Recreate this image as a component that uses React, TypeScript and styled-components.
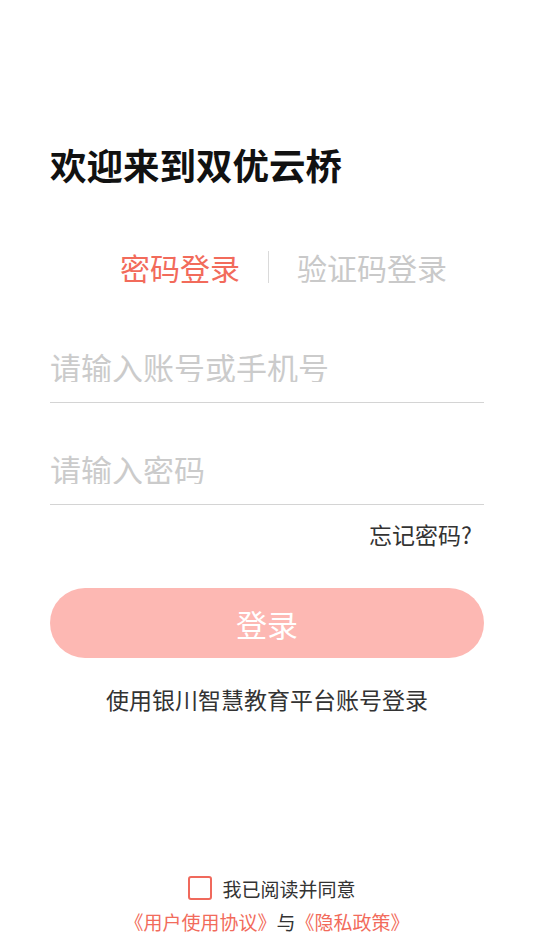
import React, { useState } from "react";
import styled, { createGlobalStyle } from "styled-components";

const GlobalStyle = createGlobalStyle`
  html, body { margin: 0; padding: 0; background: #ffffff; }
  * { box-sizing: border-box; }
  body { font-family: "Noto Sans CJK SC", "Noto Sans", sans-serif; }
  input::placeholder { color: #cbcbcb; }
`;

const Page = styled.div`
  width: 534px;
  height: 950px;
  display: flex;
  flex-direction: column;
  padding: 147px 50px 19px;
  background: #fff;
`;

const Title = styled.h1`
  margin: 0;
  font-size: 36.5px;
  line-height: 36px;
  font-weight: 700;
  color: #111;
`;

const Tabs = styled.div`
  display: flex;
  align-items: center;
  gap: 28px;
  margin-top: 68px;
  padding-left: 70px;
`;

const Tab = styled.div<{ $active?: boolean }>`
  font-size: 30px;
  line-height: 30px;
  color: ${(p) => (p.$active ? "#f26b5b" : "#c9c9c9")};
  cursor: pointer;
`;

const Divider = styled.div`
  width: 1px;
  height: 32px;
  background: #dadada;
`;

const Field = styled.div<{ $first?: boolean }>`
  margin-top: ${(p) => (p.$first ? "68px" : "50px")};
  padding-bottom: 20px;
  border-bottom: 1px solid #d4d4d4;
`;

const Input = styled.input`
  display: block;
  width: 100%;
  border: none;
  outline: none;
  padding: 0;
  font-family: inherit;
  font-size: 31px;
  line-height: 31px;
  height: 31px;
  color: #333;
  background: transparent;
`;

const Forgot = styled.div`
  align-self: flex-end;
  margin-top: 18px;
  margin-right: 12px;
  font-size: 23px;
  line-height: 23px;
  color: #333;
`;

const LoginButton = styled.button`
  margin-top: 42px;
  height: 70px;
  width: 100%;
  border: none;
  border-radius: 35px;
  background: #fdb8b3;
  color: #fff;
  font-family: inherit;
  font-size: 31px;
  line-height: 31px;
`;

const Hint = styled.div`
  margin-top: 30px;
  text-align: center;
  font-size: 23px;
  line-height: 23px;
  color: #333;
`;

const Footer = styled.div`
  margin-top: auto;
  display: flex;
  flex-direction: column;
  align-items: center;
  gap: 12px;
`;

const AgreeRow = styled.label`
  display: flex;
  align-items: center;
  gap: 10px;
  font-size: 19px;
  line-height: 19px;
  color: #333;
  margin-left: 10px;
`;

const Box = styled.span<{ $checked: boolean }>`
  width: 24px;
  height: 24px;
  border: 2px solid #f0695c;
  border-radius: 3px;
  background: ${(p) => (p.$checked ? "#f0695c" : "#fff")};
`;

const Links = styled.div`
  font-size: 19px;
  line-height: 19px;
  color: #333;
`;

const Link = styled.span`
  color: #f26b5b;
`;

export default function App() {
  const [checked, setChecked] = useState(false);
  return (
    <>
      <GlobalStyle />
      <Page>
        <Title>欢迎来到双优云桥</Title>
        <Tabs>
          <Tab $active>密码登录</Tab>
          <Divider />
          <Tab>验证码登录</Tab>
        </Tabs>
        <Field $first>
          <Input placeholder="请输入账号或手机号" />
        </Field>
        <Field>
          <Input type="password" placeholder="请输入密码" />
        </Field>
        <Forgot>忘记密码?</Forgot>
        <LoginButton>登录</LoginButton>
        <Hint>使用银川智慧教育平台账号登录</Hint>
        <Footer>
          <AgreeRow onClick={() => setChecked(!checked)}>
            <Box $checked={checked} />
            我已阅读并同意
          </AgreeRow>
          <Links>
            <Link>《用户使用协议》</Link>与<Link>《隐私政策》</Link>
          </Links>
        </Footer>
      </Page>
    </>
  );
}
